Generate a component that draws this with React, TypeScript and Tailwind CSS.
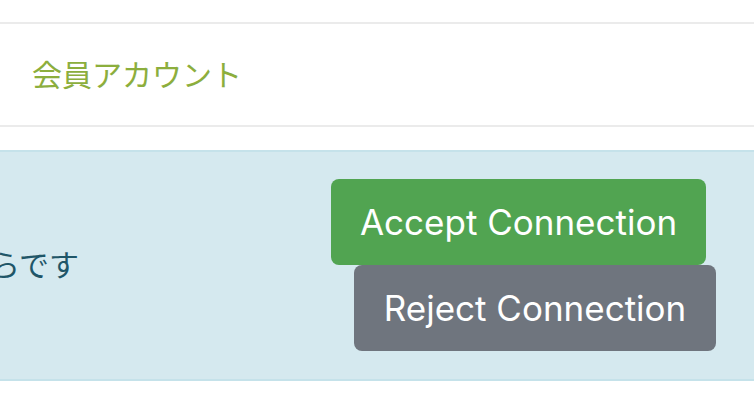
export default function App() {
    return (
        <div className="w-[754px] h-[400px] overflow-hidden bg-white font-['Inter','Noto_Sans_CJK_JP',sans-serif]">
            <div className="h-[22px]" />

            {/* menu row */}
            <div className="h-[105px] border-y-2 border-[#ebebeb] flex items-center pl-[32px]">
                <span className="text-[30px] leading-none text-[#8cae3d] font-['Noto_Sans_CJK_JP',sans-serif] -mt-[3px]">
                    会員アカウント
                </span>
            </div>

            <div className="h-[23px]" />

            {/* connection request alert */}
            <div className="h-[231px] bg-[#d5e9ef] border-y-2 border-[#c5e2ea] flex items-center justify-between">
                <p className="-ml-[40px] -mt-[6px] text-[30px] leading-none text-[#1f5668] font-['Noto_Sans_CJK_JP',sans-serif] whitespace-nowrap">
                    からです
                </p>

                <div className="flex flex-col items-end mr-[38px] -mt-[1px]">
                    <button className="w-[375px] h-[86px] mr-[10px] rounded-lg bg-[#51a451] text-white text-[35px] leading-none font-['Inter',sans-serif]">
                        Accept Connection
                    </button>
                    <button className="w-[362px] h-[86px] rounded-lg bg-[#6f757e] text-white text-[35px] leading-none font-['Inter',sans-serif]">
                        Reject Connection
                    </button>
                </div>
            </div>
        </div>
    );
}
